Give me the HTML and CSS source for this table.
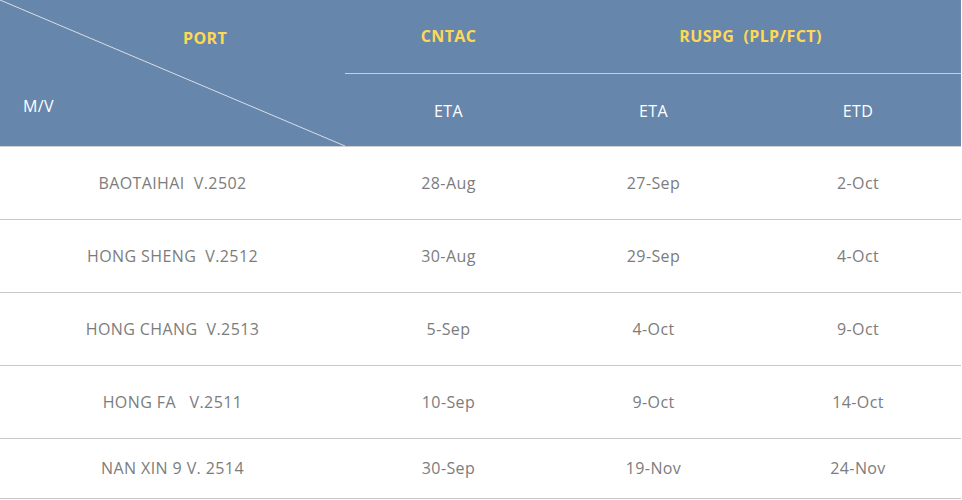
FILE: index.html
```html
<!DOCTYPE html>
<html>
<head>
<meta charset="utf-8">
<link rel="stylesheet" href="styles.css">
</head>
<body>
<table class="sched">
  <colgroup>
    <col class="c1"><col class="c2"><col class="c3"><col class="c4">
  </colgroup>
  <thead>
    <tr class="h1">
      <th rowspan="2" class="corner">
        <svg class="diag" viewBox="0 0 345 146" preserveAspectRatio="none"><line x1="0" y1="0" x2="345" y2="146" stroke="#d9dee6" stroke-width="1"/></svg>
        <span class="port">PORT</span>
        <span class="mv">M/V</span>
      </th>
      <th class="gold">CNTAC</th>
      <th colspan="2" class="gold wide">RUSPG&nbsp;&nbsp;(PLP/FCT)</th>
    </tr>
    <tr class="h2">
      <th class="sub">ETA</th>
      <th class="sub">ETA</th>
      <th class="sub">ETD</th>
    </tr>
  </thead>
  <tbody>
    <tr><td>BAOTAIHAI&nbsp;&nbsp;V.2502</td><td>28-Aug</td><td>27-Sep</td><td>2-Oct</td></tr>
    <tr><td>HONG SHENG&nbsp;&nbsp;V.2512</td><td>30-Aug</td><td>29-Sep</td><td>4-Oct</td></tr>
    <tr><td>HONG CHANG&nbsp;&nbsp;V.2513</td><td>5-Sep</td><td>4-Oct</td><td>9-Oct</td></tr>
    <tr><td>HONG FA&nbsp;&nbsp;&nbsp;V.2511</td><td>10-Sep</td><td>9-Oct</td><td>14-Oct</td></tr>
    <tr class="last"><td>NAN XIN 9 V. 2514</td><td>30-Sep</td><td>19-Nov</td><td>24-Nov</td></tr>
  </tbody>
</table>
</body>
</html>
```
FILE: styles.css
```css
html, body {
  margin: 0;
  padding: 0;
  background: #ffffff;
}
body {
  font-family: "Open Sans", "Noto Sans", sans-serif;
  letter-spacing: 0.4px;
}
.sched {
  width: 961px;
  border-collapse: collapse;
  table-layout: fixed;
}
.c1 { width: 345px; }
.c2 { width: 207px; }
.c3 { width: 203px; }
.c4 { width: 206px; }
.sched th,
.sched td {
  box-sizing: border-box;
  padding: 0;
  text-align: center;
  vertical-align: middle;
  line-height: 20px;
}
.sched th {
  background: #6786ab;
  color: #ffffff;
  font-weight: normal;
  font-size: 16px;
}
.h1 th { height: 73px; }
.h2 th { height: 73px; }
.h1 th.gold {
  color: #ffd955;
  font-weight: bold;
  font-size: 16px;
  border-bottom: 1px solid #c5d0de;
  padding-bottom: 1px;
}
.h1 th.wide {
  padding-right: 12px;
}
.h2 th.sub {
  padding-top: 2px;
}
thead tr.h2 th, .corner {
  border-bottom: 1px solid #d0d0d0;
}
.corner {
  position: relative;
  overflow: hidden;
}
.diag {
  position: absolute;
  left: 0;
  top: 0;
  width: 345px;
  height: 146px;
}
.port {
  position: absolute;
  left: 183px;
  top: 28px;
  color: #ffd955;
  font-weight: bold;
  font-size: 16px;
}
.mv {
  position: absolute;
  left: 23px;
  top: 96px;
  color: #ffffff;
  font-size: 16px;
}
.sched td {
  height: 73px;
  color: #7c7c7c;
  font-size: 16px;
  border-bottom: 1px solid #c8c8c8;
}
.sched tr.last td {
  height: 60px;
}
```
